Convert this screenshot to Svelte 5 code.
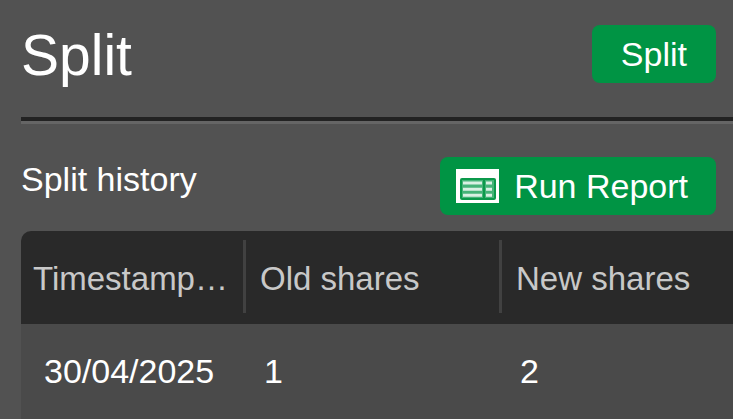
<script lang="ts">
	type Split = { date: string; oldShares: number; newShares: number };

	let splits: Split[] = $state([{ date: '30/04/2025', oldShares: 1, newShares: 2 }]);

	const columns = ['Timestamp…', 'Old shares', 'New shares'];
</script>

<main>
	<header>
		<h1>Split</h1>
		<button type="button">Split</button>
	</header>

	<section>
		<div class="toolbar">
			<h2>Split history</h2>
			<button type="button" class="report">
				<svg viewBox="0 0 43 34" width="43" height="34" aria-hidden="true">
					<path fill="#fff" d="M0 0h43v34H0z" />
					<rect x="4" y="9" width="36" height="22" rx="2" fill="#0b994b" />
					<path fill="#45b378" d="M6 11h21v18H6zM29 11h9v18h-9z" />
					<path
						fill="#d9f0e3"
						d="M7 12.5h19v3H7zM7 18.7h19v3H7zM7 24.8h19v3H7zM30 12.5h6v3h-6zM30 18.7h6v3h-6zM30 24.8h6v3h-6z"
					/>
				</svg>
				Run Report
			</button>
		</div>

		<table>
			<colgroup>
				<col class="col-date" />
				<col class="col-old" />
				<col />
			</colgroup>
			<thead>
				<tr>
					{#each columns as column (column)}
						<th scope="col"><div>{column}</div></th>
					{/each}
				</tr>
			</thead>
			<tbody>
				{#each splits as split (split.date)}
					<tr>
						<td class="date">{split.date}</td>
						<td>{split.oldShares}</td>
						<td>{split.newShares}</td>
					</tr>
				{/each}
			</tbody>
		</table>
	</section>
</main>

<style>
	:global(body) {
		background: #525252;
	}
	main {
		padding-left: 21px;
		overflow: hidden;
		color: #fff;
		font-family: 'Liberation Sans', Arial, sans-serif;
		font-size: 34px;
	}
	header {
		display: flex;
		align-items: center;
		justify-content: space-between;
		padding: 25px 17px 34px 0;
		border-bottom: 4px solid #222;
	}
	h1,
	h2 {
		margin: 0;
		font-weight: 400;
	}
	h1 {
		padding-top: 2px;
		font-size: 57px;
		line-height: 56px;
	}
	h2 {
		font-size: 34px;
		line-height: 44px;
	}
	section {
		border-top: 3px solid #656565;
	}
	.toolbar {
		display: flex;
		align-items: flex-start;
		justify-content: space-between;
		padding: 33px 17px 16px 0;
	}
	button {
		display: flex;
		align-items: center;
		justify-content: center;
		height: 58px;
		padding: 0 29px;
		border: 0;
		border-radius: 8px;
		background: #009444;
		color: #fff;
		font: inherit;
		white-space: nowrap;
		cursor: pointer;
	}
	.report {
		gap: 15px;
		padding: 0 28px 0 16px;
	}
	table {
		width: 100%;
		table-layout: fixed;
		border-collapse: collapse;
	}
	.col-date {
		width: 225px;
	}
	.col-old {
		width: 256px;
	}
	th {
		padding: 9px 0 11px;
		background: #292929;
		color: #c8c8c8;
		font-size: 33px;
		font-weight: 400;
		text-align: left;
	}
	th:first-child {
		border-top-left-radius: 10px;
	}
	th div {
		padding: 5px 0 0 14px;
		border-right: 3px solid #414141;
		line-height: 68px;
		overflow: hidden;
		white-space: nowrap;
	}
	th:first-child div {
		padding-left: 12px;
	}
	th:last-child div {
		border-right: 0;
	}
	td {
		padding: 0 0 0 18px;
		background: #4a4a4a;
		line-height: 95px;
	}
	td.date {
		padding-left: 23px;
	}
</style>
